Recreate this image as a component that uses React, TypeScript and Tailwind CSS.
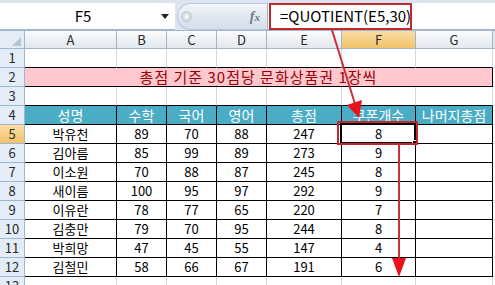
const cols = ["A", "B", "C", "D", "E", "F", "G"];

const heads = ["성명", "수학", "국어", "영어", "총점", "쿠폰개수", "나머지총점"];

const rows: (string | number)[][] = [
  ["박유천", 89, 70, 88, 247, 8],
  ["김아름", 85, 99, 89, 273, 9],
  ["이소원", 70, 88, 87, 245, 8],
  ["새이름", 100, 95, 97, 292, 9],
  ["이유란", 78, 77, 65, 220, 7],
  ["김충만", 79, 70, 95, 244, 8],
  ["박희망", 47, 45, 55, 147, 4],
  ["김철민", 58, 66, 67, 191, 6],
];

function RowHead({ n, active }: { n: number | string; active?: boolean }) {
  return (
    <div
      className={
        active
          ? "flex items-center justify-center border-r border-b border-[#9eb6ce] bg-linear-to-b from-[#f9dca4] to-[#f2c46a] text-[13px] text-[#2a2a2a]"
          : "flex items-center justify-center border-r border-b border-[#9eb6ce] bg-[#e4ecf7] text-[13px] text-[#2a2a2a]"
      }
    >
      {n}
    </div>
  );
}

function FormulaBar() {
  return (
    <div className="h-[31px] bg-[#dbe5f2] pt-[3px] border-b border-[#9eb6ce]">
      <div className="flex h-[27px]">
        <div className="w-[175px] bg-white flex items-center border-b border-[#a7b4c5]">
          <div className="w-[160px] pl-[6px] text-center text-[15px] text-black">F5</div>
          <svg width="8" height="5" viewBox="0 0 8 5" className="ml-[1px]">
            <polygon points="0,0 8,0 4,5" fill="#222" />
          </svg>
        </div>
        <div className="w-[2px]" />
        <div className="w-[90px] flex items-center rounded-l-full bg-linear-to-b from-[#f3f6fa] via-[#e2e9f2] to-[#d3deeb] border border-[#b9c7d8] border-r-0">
          <div className="ml-[3px] w-[11px] h-[11px] rounded-full bg-radial from-[#ffffff] to-[#a9b3bf]" />
          <div className="ml-auto mr-[7px] text-[14px] italic font-bold text-[#6d7c8e] font-['Liberation_Serif',serif]">
            f<span className="text-[11px]">x</span>
          </div>
        </div>
        <div className="flex-1 bg-white border-l border-b border-[#a7b4c5] flex items-center pl-[12px] text-[15px] text-black">
          =QUOTIENT(E5,30)
        </div>
      </div>
    </div>
  );
}

export default function App() {
  return (
    <div className="relative w-[495px] h-[285px] overflow-hidden bg-white font-['Noto_Sans_CJK_KR','Noto_Sans',sans-serif]">
      <FormulaBar />
      <div className="grid grid-cols-[25px_92px_50px_50px_50px_75px_74px_77px_2px] grid-rows-[18px_repeat(12,19px)_8px]">
        <div className="relative border-r border-b border-[#9eb6ce] bg-[#e4ecf7]">
          <svg width="9" height="9" viewBox="0 0 9 9" className="absolute right-[3px] bottom-[2px]">
            <polygon points="9,0 9,9 0,9" fill="#b4c4d8" />
          </svg>
        </div>
        {cols.map((c) => (
          <div
            key={c}
            className={
              c === "F"
                ? "flex items-center justify-center border-r border-b border-[#9eb6ce] bg-linear-to-b from-[#f9dca4] to-[#f2c46a] text-[13px] text-[#2a2a2a]"
                : "flex items-center justify-center border-r border-b border-[#9eb6ce] bg-linear-to-b from-[#fafbfc] to-[#e3e8ef] text-[13px] text-[#2a2a2a]"
            }
          >
            {c}
          </div>
        ))}
        <div className="border-b border-[#9eb6ce] bg-[#e3e8ef]" />

        {/* row 1 */}
        <RowHead n={1} />
        {cols.map((c) => (
          <div key={c} className="border-r border-[#d0d7e5] border-b border-b-black" />
        ))}
        <div className="border-b border-[#d0d7e5]" />

        {/* row 2 */}
        <RowHead n={2} />
        <div className="col-span-7 flex items-center justify-center border-r border-b border-black bg-[#ffc7ce] text-[15px] tracking-[1px] text-[#9c0006]">
          총점 기준 30점당 문화상품권 1장씩
        </div>
        <div className="border-b border-[#d0d7e5]" />

        {/* row 3 */}
        <RowHead n={3} />
        {cols.map((c) => (
          <div key={c} className="border-r border-[#d0d7e5] border-b border-b-black" />
        ))}
        <div className="border-b border-[#d0d7e5]" />

        {/* row 4 */}
        <RowHead n={4} />
        {heads.map((h) => (
          <div
            key={h}
            className="flex items-center justify-center border-r border-b border-black bg-[#4bacc6] text-[14px] text-white"
          >
            {h}
          </div>
        ))}
        <div className="border-b border-[#d0d7e5]" />

        {rows.map((r, i) => (
          <>
            <RowHead key={"h" + i} n={i + 5} active={i === 0} />
            {[...r, ""].map((v, j) => (
              <div
                key={i + "-" + j}
                className="relative flex items-center justify-center border-r border-b border-black text-[13px] text-black"
              >
                {v}
                {i === 0 && j === 5 && (
                  <>
                    <div className="absolute -left-[2px] -top-[2px] -right-[1px] -bottom-[1px] border-2 border-black" />
                    <div className="absolute -right-[3px] -bottom-[3px] w-[6px] h-[6px] bg-black border border-white" />
                  </>
                )}
              </div>
            ))}
            <div key={"e" + i} className="border-b border-[#d0d7e5]" />
          </>
        ))}

        {/* row 13 */}
        <div className="overflow-hidden flex justify-center border-r border-[#9eb6ce] bg-[#e4ecf7] text-[13px] leading-[17px] text-[#2a2a2a]">
          13
        </div>
        {cols.map((c) => (
          <div key={c} className="border-r border-[#d0d7e5]" />
        ))}
        <div />
      </div>

      {/* annotations */}
      <div className="absolute left-[269px] top-[3px] w-[143px] h-[27px] border-2 border-[#c1272d]" />
      <div className="absolute left-[337px] top-[121px] w-[81px] h-[24px] border-2 border-[#c1272d]" />
      <svg className="absolute left-0 top-0 pointer-events-none" width="495" height="285" viewBox="0 0 495 285">
        <line x1="332" y1="30" x2="355" y2="104" stroke="#c8313a" strokeWidth="2" />
        <polygon points="359,118 362,100 347,105" fill="#e8101a" />
        <line x1="399" y1="145" x2="399" y2="262" stroke="#c8313a" strokeWidth="2" />
        <polygon points="399,277 392,258 406,258" fill="#e8101a" />
      </svg>
    </div>
  );
}
